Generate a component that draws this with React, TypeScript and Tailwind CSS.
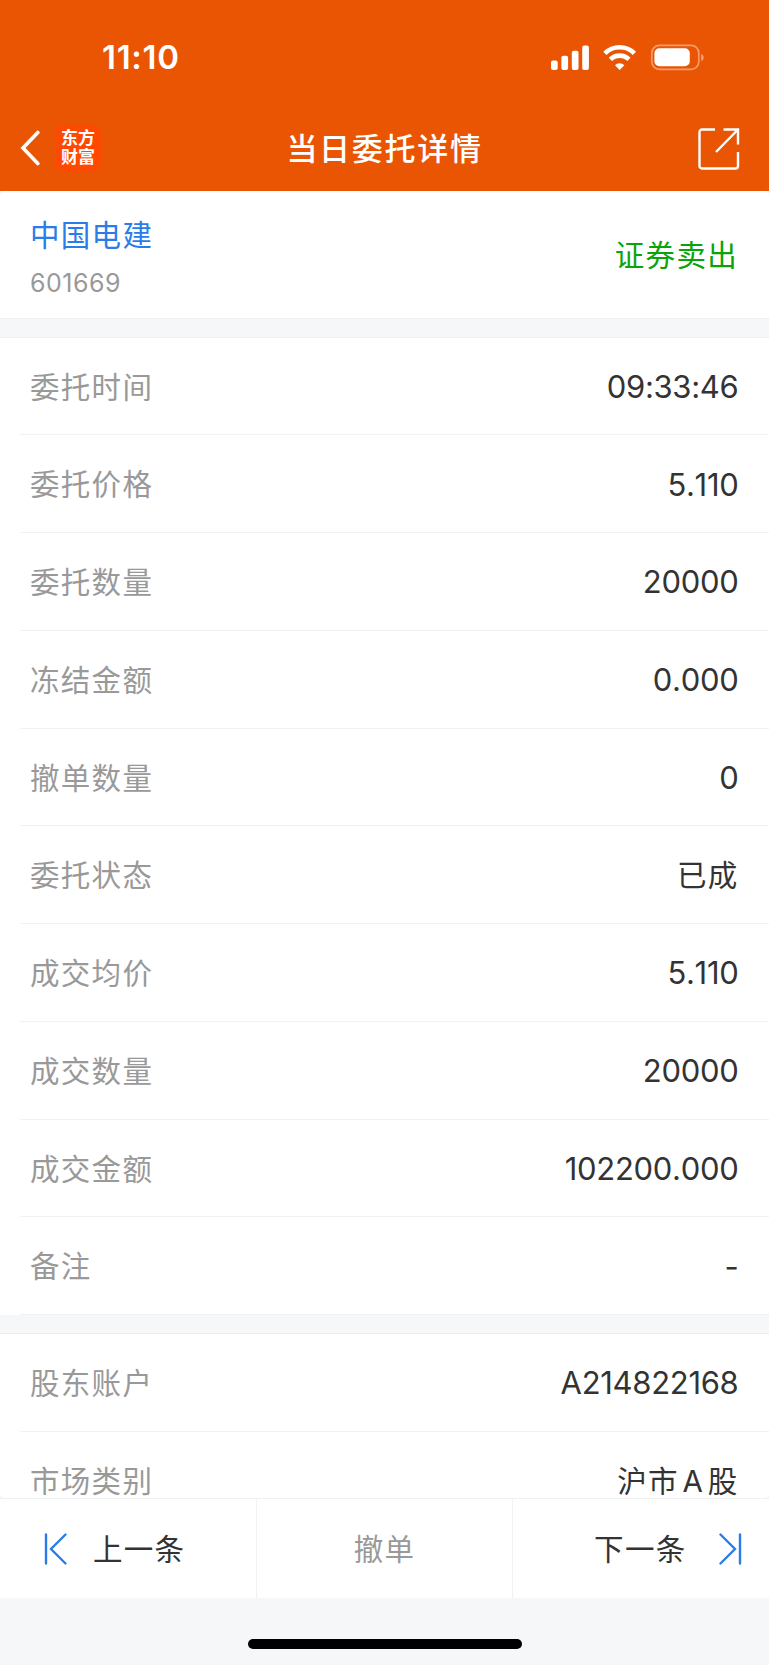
interface Field {
  label: string;
  value: string;
  cjk?: boolean;
}

const orderFields: Field[] = [
  { label: '委托时间', value: '09:33:46' },
  { label: '委托价格', value: '5.110' },
  { label: '委托数量', value: '20000' },
  { label: '冻结金额', value: '0.000' },
  { label: '撤单数量', value: '0' },
  { label: '委托状态', value: '已成', cjk: true },
  { label: '成交均价', value: '5.110' },
  { label: '成交数量', value: '20000' },
  { label: '成交金额', value: '102200.000' },
  { label: '备注', value: '-' },
];

function StatusIcons() {
  return (
    <svg width="154" height="28" viewBox="0 0 154 28" fill="none">
      {/* Signal */}
      <g fill="#fff">
        <rect x="1" y="16.5" width="6.7" height="9.4" rx="2" />
        <rect x="11.4" y="11.8" width="6.7" height="14.1" rx="2" />
        <rect x="21.8" y="6.7" width="6.7" height="19.2" rx="2" />
        <rect x="32.2" y="1.5" width="6.7" height="24.4" rx="2" />
      </g>
      {/* Wifi */}
      <g stroke="#fff" strokeWidth="4.6">
        <path d="M54.9 9.3a21 21 0 0 1 29.5 0" />
        <path d="M60.4 15.4a13.2 13.2 0 0 1 18.5 0" />
      </g>
      <path d="M69.65 26l-4.7-4.7a6.700 6.700 0 0 1 9.400 0z" fill="#fff" />
      {/* Battery */}
      <rect x="101.800" y="1.300" width="47" height="24" rx="7.600" stroke="#fff" strokeOpacity=".42" strokeWidth="1.700" />
      <rect x="104.400" y="4.300" width="35.400" height="18" rx="5" fill="#fff" />
      <path d="M151.300 9.900c3 1.300 3 6 0 7.200z" fill="#fff" fillOpacity=".5" />
    </svg>
  );
}

function Row({ label, value, cjk }: Field) {
  return (
    <div className="ml-5 flex h-[97.75px] items-center justify-between border-b border-[#f2f2f3] pl-2.5">
      <span className="pt-[3px] text-[29.5px] leading-none tracking-[1.3px] text-[#999]">{label}</span>
      {cjk ? (
        <span className="mr-[30.5px] pt-[3px] text-[29.5px] leading-none tracking-[1.3px] text-[#333] [word-spacing:-6px]">{value}</span>
      ) : (
        <span className="mr-[30.5px] pt-px text-[31px] leading-none tracking-[-0.3px] text-[#333] [font-kerning:none]">{value}</span>
      )}
    </div>
  );
}

export default function App() {
  return (
    <div className="flex h-[1665px] w-[769px] flex-col overflow-hidden bg-[#f6f7f9] font-['Inter','Noto_Sans_CJK_SC',sans-serif]">
      {/* Header */}
      <header className="flex h-[191px] shrink-0 flex-col bg-[#ea5504] text-white">
        <div className="flex h-[115px] items-center justify-between pr-[65px] pl-[102px]">
          <span className="text-[33px] leading-none font-semibold tracking-[0.7px]">11:10</span>
          <StatusIcons />
        </div>
        <div className="grid h-[66px] grid-cols-3 items-center">
          <div className="flex items-center pl-[19px]">
            <svg width="22" height="36" viewBox="0 0 22 36" fill="none" stroke="#fff" strokeWidth="3.6" strokeLinecap="round" strokeLinejoin="miter">
              <path d="M18.8 2.5L4 18l14.8 15.5" />
            </svg>
            <div className="ml-[14px] flex size-[46px] flex-col items-center justify-center rounded-[9px] bg-[#ff4800] text-[17px] leading-[19px] font-bold">
              <span>东方</span>
              <span>财富</span>
            </div>
          </div>
          <h1 className="pt-px text-center text-[31px] leading-none font-medium tracking-[1.7px] whitespace-nowrap">当日委托详情</h1>
          <svg className="mt-[2px] mr-[29.5px] justify-self-end" width="42" height="42" viewBox="0 0 42 42" fill="none" stroke="#fff" strokeWidth="2.4">
            <path d="M17 1.5H4A2.5 2.5 0 0 0 1.5 4V38A2.5 2.5 0 0 0 4 40.5H37.5A2.5 2.5 0 0 0 40 38V24" />
            <path d="M25.5 1.5H40V16.5M40 1.5L18 24" />
          </svg>
        </div>
      </header>

      {/* Stock */}
      <section className="flex h-[127px] shrink-0 justify-between rounded-t-[5px] bg-white pr-[31px] pl-[30px]">
        <div className="flex flex-col pt-[29px]">
          <span className="text-[29.5px] leading-[30px] tracking-[1.3px] text-[#2a7de9]">中国电建</span>
          <span className="mt-[20px] text-[25px] leading-[26px] tracking-[0.5px] text-[#999]">601669</span>
        </div>
        <span className="pt-[49px] text-[29.5px] leading-[30px] tracking-[1.3px] text-[#0aa30a]">证券卖出</span>
      </section>
      <div className="h-[19.5px] shrink-0 border-y border-[#eeeff1]" />

      {/* Order details */}
      <section className="shrink-0 bg-white">
        {orderFields.map((field) => (
          <Row key={field.label} {...field} />
        ))}
      </section>
      <div className="h-[19px] shrink-0 border-b border-[#ececee]" />

      {/* Account, runs on under the toolbar */}
      <section className="h-[164px] shrink-0 rounded-b-[5px] bg-white">
        <Row label="股东账户" value="A214822168" />
        <Row label="市场类别" value="沪市 A 股" cjk />
      </section>

      {/* Toolbar */}
      <nav className="z-10 grid h-[100px] shrink-0 grid-cols-[257px_256px_256px] items-center border-t border-[#f0f1f2] bg-white text-[29.5px] leading-none tracking-[1.3px] text-[#333]">
        <button className="flex h-full items-center border-r border-[#f2f2f3] pl-[43px]">
          <svg width="24" height="32" viewBox="0 0 24 32" fill="none" stroke="#2a7de9" strokeWidth="2.4" strokeLinecap="round">
            <path d="M3 1.5V30.5M22.5 1.5L8 16l14.5 14.5" />
          </svg>
          <span className="ml-[26px] pt-[2px]">上一条</span>
        </button>
        <button className="h-full border-r border-[#f2f2f3] pt-[2px] text-[#999]">撤单</button>
        <button className="flex h-full items-center justify-end pr-[27px]">
          <span className="pt-[2px]">下一条</span>
          <svg className="ml-[31.5px]" width="24" height="32" viewBox="0 0 24 32" fill="none" stroke="#2a7de9" strokeWidth="2.4" strokeLinecap="round">
            <path d="M22 1.5V30.5M2.5 1.5L17 16L2.5 30.5" />
          </svg>
        </button>
      </nav>

      {/* Home indicator */}
      <div className="mt-[41px] h-[10px] w-[274px] shrink-0 self-center rounded-full bg-black" />
    </div>
  );
}
